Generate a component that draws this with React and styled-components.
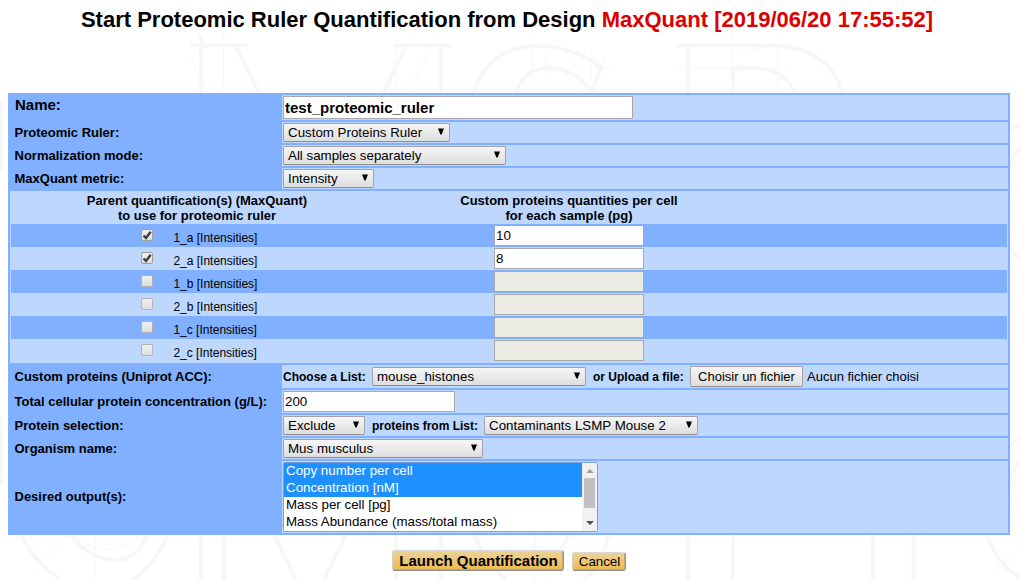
import React from "react";
import styled, { createGlobalStyle } from "styled-components";

const DARK = "#80b0ff";
const LIGHT = "#bdd7ff";

const GlobalStyle = createGlobalStyle`
  * { box-sizing: border-box; }
  html, body { margin: 0; background: #fff; overflow: hidden; }
  body, input, button { font-family: "Liberation Sans", Arial, sans-serif; color: #000; }
`;

const Page = styled.main`
  position: relative;
  isolation: isolate;
  width: 1021px;
  height: 580px;
  overflow: hidden;
  padding: 0 11px 0 8px;
`;

const Watermark = styled.svg`
  position: absolute;
  inset: 0;
  z-index: -1;
  fill: none;
  stroke: #f7f7f7;
  stroke-width: 4;
`;

const Title = styled.h1`
  margin: 0;
  height: 93px;
  padding: 7px 4px 0 0;
  font-size: 22px;
  line-height: 26px;
  text-align: center;
  white-space: nowrap;
  span { color: #d00; }
`;

const Table = styled.section`
  display: flex;
  flex-direction: column;
  gap: 2px;
  padding: 2px;
  background: ${DARK};
`;

const Row = styled.div`
  display: flex;
  height: ${(p) => p.$h || 21}px;
`;

const Label = styled.div`
  width: 272px;
  flex: none;
  padding-left: ${(p) => (p.$large ? 5 : 4.5)}px;
  padding-bottom: ${(p) => p.$lift || 0}px;
  display: flex;
  align-items: center;
  font-weight: bold;
  font-size: ${(p) => (p.$large ? 15 : 13)}px;
  white-space: nowrap;
`;

const Cell = styled.div`
  flex: 1;
  padding: 1px;
  display: flex;
  align-items: center;
  background: ${LIGHT};
  white-space: nowrap;
`;

const Inline = styled.span`
  width: ${(p) => p.$w}px;
  padding-left: ${(p) => p.$pad || 0}px;
  font-size: 12px;
  font-weight: bold;
`;

const TextInput = styled.input`
  display: block;
  width: ${(p) => p.$w}px;
  height: ${(p) => (p.$large ? 23 : 21)}px;
  margin: 0;
  padding: 0 1px;
  border: 1px solid #a9a9a9;
  border-radius: 0;
  outline: none;
  background: #fff;
  font-size: ${(p) => (p.$large ? 15 : 13.33)}px;
  font-weight: ${(p) => (p.$large ? "bold" : "normal")};
  &:disabled { background: #ebebe4; }
`;

const SelectBox = styled.div`
  display: flex;
  align-items: center;
  justify-content: space-between;
  width: ${(p) => p.$w}px;
  height: 19px;
  padding: 0 4px;
  border: 1px solid #a2a2a2;
  border-bottom-color: #8d8d8d;
  border-radius: 2px;
  background: linear-gradient(#f6f6f6, #dedede);
  font-size: 13.33px;
  svg { display: block; margin-top: -3px; }
`;

const FileButton = styled.button`
  width: 113px;
  height: 21px;
  padding: 0;
  margin-right: 4px;
  border: 1px solid #a2a2a2;
  border-bottom-color: #8d8d8d;
  border-radius: 2px;
  background: linear-gradient(#f6f6f6, #dedede);
  font-size: 13px;
`;

const FileName = styled.span`
  font-size: 13px;
`;

const Samples = styled.div`
  height: 172px;
  padding: 0 1px 1px;
  background: ${LIGHT};
`;

const SampleHead = styled.div`
  display: flex;
  height: 33px;
  padding-top: 2px;
  font-size: 13px;
  line-height: 15px;
  font-weight: bold;
  text-align: center;
`;

const ParentHead = styled.div`
  width: 372px;
`;

const QuantityHead = styled.div`
  width: 372px;
`;

const SampleRow = styled.label`
  display: flex;
  height: 23px;
  background: ${(p) => (p.$dark ? DARK : LIGHT)};
`;

const CheckCell = styled.span`
  width: 162px;
  padding: 5px 0 0 130px;
`;

const Check = styled.span`
  display: block;
  width: 12px;
  height: 12px;
  border: 1px solid ${(p) => (p.$off ? "#b4b4b4" : "#a0a0a0")};
  border-radius: 2px;
  background: linear-gradient(#f0f0f0, #dedede);
  svg { display: block; }
`;

const SampleName = styled.span`
  width: 321px;
  padding: 7px 0 0 0.4px;
  font-size: 12px;
  line-height: 14px;
`;

const InputCell = styled.span`
  padding-top: 1px;
`;

const ListBox = styled.div`
  display: flex;
  width: 315px;
  height: 70px;
  border: 1px solid #7d9fd8;
  border-radius: 2px;
  background: #fff;
`;

const Options = styled.div`
  flex: 1;
`;

const Option = styled.div`
  height: 17px;
  padding-left: 2px;
  font-size: 13.33px;
  line-height: 16px;
  background: ${(p) => (p.$selected ? "#1e90ff" : "#fff")};
  color: ${(p) => (p.$selected ? "#fff" : "#000")};
`;

const ScrollBar = styled.div`
  display: flex;
  flex-direction: column;
  align-items: center;
  width: 15px;
  padding: 6px 0;
  background: #f1f1f1;
`;

const Thumb = styled.div`
  width: 11px;
  height: 30px;
  margin: 5px 0 13px;
  background: #c1c1c1;
`;

const Actions = styled.footer`
  display: flex;
  align-items: flex-end;
  gap: 8px;
  height: 36px;
  padding-left: 384px;
`;

const ActionButton = styled.button`
  width: ${(p) => (p.$large ? 172 : 54)}px;
  height: ${(p) => (p.$large ? 21 : 19)}px;
  padding: 1px 0 0 1px;
  border: 1px solid;
  border-color: #d8d8d8 #9c9484 #8d8d8d #d0d0d0;
  border-radius: 3px;
  box-shadow: inset -1px -1px 0 #c0a878;
  background: linear-gradient(#ecd39a, #efba50);
  font-size: ${(p) => (p.$large ? 15 : 13.33)}px;
  font-weight: ${(p) => (p.$large ? "bold" : "normal")};
  line-height: 16px;
  white-space: nowrap;
`;

const Select = ({ w, children }) => (
  <SelectBox $w={w}>
    {children}
    <svg width="8" height="7" viewBox="0 0 8 7"><path d="M1 0.5h6L4.6 6.5H3.4z" fill="#000" /></svg>
  </SelectBox>
);

const samples = [
  ["1_a", "10"],
  ["2_a", "8"],
  ["1_b", null],
  ["2_b", null],
  ["1_c", null],
  ["2_c", null],
];

const outputs = [
  ["Copy number per cell", true],
  ["Concentration [nM]", true],
  ["Mass per cell [pg]", false],
  ["Mass Abundance (mass/total mass)", false],
];

const Backdrop = () => (
  <Watermark width="1021" height="580" viewBox="0 0 1021 580">
    <path d="M201 35V93M190 45.500H247M235 45L259 93" />
    <path d="M394 45.500H451M407 45L383 93M440.500 45V93" />
    <path d="M474 93C482 62 507 46 535 46C564 46 585 55 601 67L592 92M516 93C521 77 532 68 550 68C567 68 580 77 591 91" />
    <path d="M677 45.500H785M688 45V93M733 93V68H755C775 68 788 78 795 93M777 45.500C811 47 836 66 842 93" />
    <path d="M1.500 102V170M1.500 417V485" strokeWidth="3" />
    <path d="M1009 131Q1014 127 1021 124M1021 148Q1003 163 1010 188M1009 247Q1014 254 1021 259M1009 446Q1014 441 1021 438M1021 462Q1003 477 1010 504" />
    <path d="M21 535C31 555 44 568 60 579M70 535C85 552 98 560 116 560C130 560 142 550 147 535M168 535C159 555 146 571 132 580" />
    <path d="M201 535V580M224 535V580M274 535L296 580M346 535L324 580M396 535V580M440.500 535V580M475 535Q482 560 506 580M568 535Q563 550 550 562M608 535Q603 563 584 580M688 535V580M733 535V580M873 535V580M913.500 535V580M987 535C994 555 1006 570 1021 578" />
    <path strokeWidth="1" d="M223.500 35V93M228 35L258 93M190 56L208 93M395.500 45V93M412 35L383 93M438 35L408 93M533 35V93M546.500 57V93M591 48V93M580 67H612M580 91H601M606 56L591 92M555 47Q568 52 574 61M555 68Q568 73 573 83M677 68.500H786M732.500 35V93M777.500 35V93M742 56Q755 46 777 46M728 78Q740 66 755 68" />
    <path strokeWidth="1" d="M3 113.500H8M5 192H8M3 476L8 482M3 428.500H8M5 507H8M95 535V580M31 571L67 537M75 538Q113 562 137 535M316 545L322 535L328 545M480 535V567M535.500 535V580M546.500 535V580M490 535L550 575M920 535L926 541M996 571L1021 546M1010 242L1021 231M1017 145Q1012 172 1017 192M1017 460Q1012 487 1017 507M1009 192H1021M1009 507H1021" />
  </Watermark>
);

export default function App() {
  return (
    <Page>
      <GlobalStyle />
      <Backdrop />
      <Title>
        Start Proteomic Ruler Quantification from Design <span>MaxQuant [2019/06/20 17:55:52]</span>
      </Title>
      <Table>
        <Row $h={25}>
          <Label $large $lift={7}>Name:</Label>
          <Cell><TextInput $w={350} $large defaultValue="test_proteomic_ruler" /></Cell>
        </Row>
        <Row>
          <Label>Proteomic Ruler:</Label>
          <Cell><Select w={167}>Custom Proteins Ruler</Select></Cell>
        </Row>
        <Row>
          <Label>Normalization mode:</Label>
          <Cell><Select w={223}>All samples separately</Select></Cell>
        </Row>
        <Row>
          <Label>MaxQuant metric:</Label>
          <Cell><Select w={91}>Intensity</Select></Cell>
        </Row>
        <Samples>
          <SampleHead>
            <ParentHead>Parent quantification(s) (MaxQuant)<br />to use for proteomic ruler</ParentHead>
            <QuantityHead>Custom proteins quantities per cell<br />for each sample (pg)</QuantityHead>
          </SampleHead>
          {samples.map(([name, amount], i) => (
            <SampleRow key={name} $dark={i % 2 === 0}>
              <CheckCell>
                <Check $off={!amount}>
                  {amount && (
                    <svg width="10" height="10" viewBox="0 0 10 10">
                      <path d="M1.500 5.500L4 8L8.700 1.800" fill="none" stroke="#3c3c3c" strokeWidth="2.300" />
                    </svg>
                  )}
                </Check>
              </CheckCell>
              <SampleName>{name} [Intensities]</SampleName>
              <InputCell><TextInput $w={150} defaultValue={amount || ""} disabled={!amount} /></InputCell>
            </SampleRow>
          ))}
        </Samples>
        <Row $h={23}>
          <Label>Custom proteins (Uniprot ACC):</Label>
          <Cell>
            <Inline $w={89}>Choose a List:</Inline>
            <Select w={214}>mouse_histones</Select>
            <Inline $w={104} $pad={7}>or Upload a file:</Inline>
            <FileButton>Choisir un fichier</FileButton>
            <FileName>Aucun fichier choisi</FileName>
          </Cell>
        </Row>
        <Row $h={23}>
          <Label>Total cellular protein concentration (g/L):</Label>
          <Cell><TextInput $w={172} defaultValue="200" /></Cell>
        </Row>
        <Row>
          <Label>Protein selection:</Label>
          <Cell>
            <Select w={82}>Exclude</Select>
            <Inline $w={119} $pad={7}>proteins from List:</Inline>
            <Select w={214}>Contaminants LSMP Mouse 2</Select>
          </Cell>
        </Row>
        <Row>
          <Label>Organism name:</Label>
          <Cell><Select w={200}>Mus musculus</Select></Cell>
        </Row>
        <Row $h={72}>
          <Label $lift={2}>Desired output(s):</Label>
          <Cell>
            <ListBox>
              <Options>
                {outputs.map(([name, selected]) => (
                  <Option key={name} $selected={selected}>{name}</Option>
                ))}
              </Options>
              <ScrollBar>
                <svg width="8" height="4" viewBox="0 0 8 4"><path d="M0 4L4 0L8 4z" fill="#a3a3a3" /></svg>
                <Thumb />
                <svg width="8" height="4" viewBox="0 0 8 4"><path d="M0 0L4 4L8 0z" fill="#505050" /></svg>
              </ScrollBar>
            </ListBox>
          </Cell>
        </Row>
      </Table>
      <Actions>
        <ActionButton $large>Launch Quantification</ActionButton>
        <ActionButton>Cancel</ActionButton>
      </Actions>
    </Page>
  );
}
